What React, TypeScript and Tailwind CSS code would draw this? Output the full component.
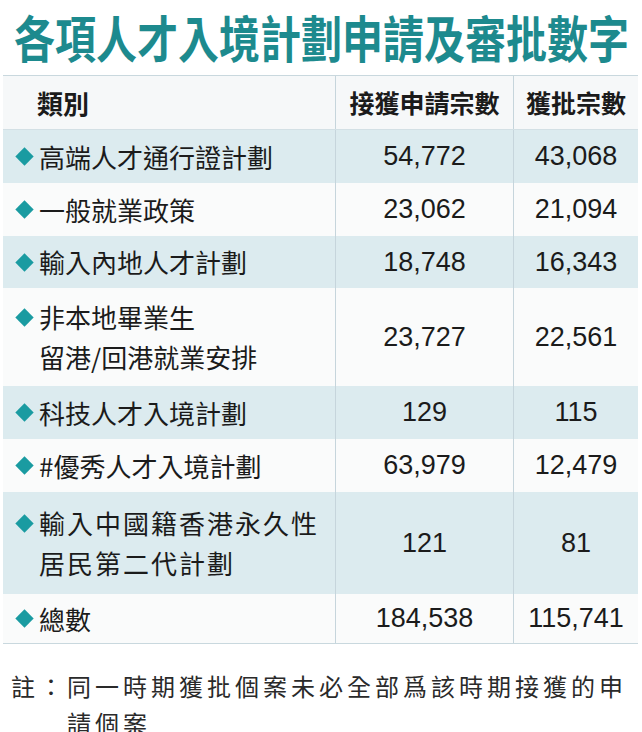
const rows = [
  { label: ["高端人才通行證計劃"], a: "54,772", b: "43,068", h: "h-[53px]", blue: true },
  { label: ["一般就業政策"], a: "23,062", b: "21,094", h: "h-[53px]", blue: false },
  { label: ["輸入內地人才計劃"], a: "18,748", b: "16,343", h: "h-[52px]", blue: true },
  { label: ["非本地畢業生", "留港/回港就業安排"], a: "23,727", b: "22,561", h: "h-[98px]", blue: false },
  { label: ["科技人才入境計劃"], a: "129", b: "115", h: "h-[53px]", blue: true },
  { label: ["#優秀人才入境計劃"], a: "63,979", b: "12,479", h: "h-[53px]", blue: false },
  { label: ["輸入中國籍香港永久性", "居民第二代計劃"], a: "121", b: "81", h: "h-[102px]", blue: true, wide: true },
  { label: ["總數"], a: "184,538", b: "115,741", h: "h-[49px]", blue: false },
];

const cjk = { fontFamily: '"Noto Sans CJK TC", "Noto Sans CJK SC", sans-serif' };
const num = { fontFamily: '"Liberation Sans", Arial, sans-serif' };

function Diamond() {
  return <span className="inline-block w-[13px] h-[13px] bg-[#1a9ba1] rotate-45 shrink-0" />;
}

export default function App() {
  return (
    <div className="w-[642px] h-[732px] bg-white overflow-hidden text-[#1b1b1b]" style={cjk}>
      <div className="h-[75px] flex items-start pl-[14px] pt-[9px]">
        <h1 className="text-[41px] leading-[42px] font-bold text-[#1d8a8e] scale-y-[1.22] origin-top mt-[1px]">
          各項人才入境計劃申請及審批數字
        </h1>
      </div>

      <div className="mx-[3px] w-[635px] border-t border-b border-[#c9d8de]">
        {/* header */}
        <div className="flex h-[54px] bg-[#f6f8f9] border-b border-[#d3e0e5]">
          <div className="w-[332px] flex items-center pl-[34px] text-[26px] font-bold">類別</div>
          <div className="w-[178px] flex items-center justify-center border-l border-[#c6d5dc] text-[25px] font-bold">
            接獲申請宗數
          </div>
          <div className="flex-1 flex items-center justify-center border-l border-[#c6d5dc] text-[25px] font-bold">
            獲批宗數
          </div>
        </div>

        {rows.map((r, i) => (
          <div key={i} className={`flex ${r.h} ${r.blue ? "bg-[#dcebef]" : "bg-[#fafbfb]"}`}>
            <div className="w-[332px] flex flex-col justify-center pl-[15px]">
              {r.label.map((t, j) => (
                <div
                  key={j}
                  className={`flex items-center text-[26px] leading-[40px] ${r.wide ? "tracking-[2px]" : ""}`}
                >
                  {j === 0 ? <Diamond /> : <span className="inline-block w-[13px] shrink-0" />}
                  <span className="ml-[8px]">{t}</span>
                </div>
              ))}
            </div>
            <div className="w-[178px] flex items-center justify-center border-l border-[#c6d5dc] text-[27px]" style={num}>
              {r.a}
            </div>
            <div className="flex-1 flex items-center justify-center border-l border-[#c6d5dc] text-[27px]" style={num}>
              {r.b}
            </div>
          </div>
        ))}
      </div>

      <div className="flex pl-[11px] pt-[23px] pr-[8px] text-[24px] leading-[37px] tracking-[4px] text-[#2a2a2a]">
        <span className="shrink-0">註：</span>
        <span>同一時期獲批個案未必全部爲該時期接獲的申請個案</span>
      </div>
    </div>
  );
}
